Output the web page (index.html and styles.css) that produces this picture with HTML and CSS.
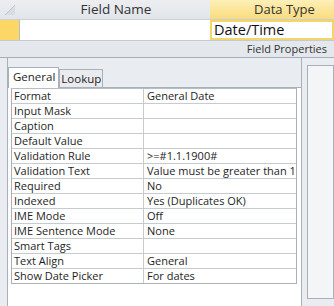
FILE: index.html
```html
<!DOCTYPE html>
<html>
<head>
<meta charset="utf-8">
<link rel="stylesheet" href="styles.css">
</head>
<body>
<div class="app">
  <div class="top">
    <div class="hdr">
      <div class="hdr-sel">
        <svg width="20" height="19" viewBox="0 0 20 19"><polygon points="5,15 15,15 15,5" fill="#d9dde3"/><line x1="5" y1="15" x2="15" y2="5" stroke="#c3c8cf" stroke-width="1"/></svg>
      </div>
      <div class="hdr-name">Field Name</div>
      <div class="hdr-type">Data Type</div>
    </div>
    <div class="row1">
      <div class="sel"></div>
      <div class="name-cell"></div>
      <div class="type-cell">Date/Time</div>
    </div>
    <div class="fp">Field Properties</div>
  </div>
  <div class="bottom">
    <div class="frame">
      <div class="tabs">
        <div class="tab active">General</div>
        <div class="tab">Lookup</div>
      </div>
      <div class="page">
        <div class="grid">
          <div class="lbl">Format</div><div class="val">General Date</div>
          <div class="lbl">Input Mask</div><div class="val"></div>
          <div class="lbl">Caption</div><div class="val"></div>
          <div class="lbl">Default Value</div><div class="val"></div>
          <div class="lbl">Validation Rule</div><div class="val">&gt;=#1.1.1900#</div>
          <div class="lbl">Validation Text</div><div class="val">Value must be greater than 1</div>
          <div class="lbl">Required</div><div class="val">No</div>
          <div class="lbl">Indexed</div><div class="val">Yes (Duplicates OK)</div>
          <div class="lbl">IME Mode</div><div class="val">Off</div>
          <div class="lbl">IME Sentence Mode</div><div class="val">None</div>
          <div class="lbl">Smart Tags</div><div class="val"></div>
          <div class="lbl">Text Align</div><div class="val">General</div>
          <div class="lbl last">Show Date Picker</div><div class="val last">For dates</div>
        </div>
      </div>
    </div>
    <div class="side"></div>
  </div>
</div>
</body>
</html>
```
FILE: styles.css
```css
html, body {
  margin: 0;
  padding: 0;
  width: 334px;
  height: 306px;
  overflow: hidden;
  background: #e9ecf0;
  font-family: "Open Sans", "Noto Sans", sans-serif;
  color: #1e1e1e;
}
.app {
  width: 334px;
  height: 306px;
  overflow: hidden;
}
.top {
  background: #e4e7eb;
}
.hdr {
  display: grid;
  grid-template-columns: 20px 190px 1fr;
  height: 19px;
  border-bottom: 1px solid #cbd0d7;
  background: linear-gradient(#eceef1, #e1e4e9);
}
.hdr-sel {
  height: 19px;
}
.hdr-sel svg {
  display: block;
}
.hdr-name {
  text-align: center;
  font-size: 13.5px;
  line-height: 19px;
  color: #333;
  padding-left: 2px;
}
.hdr-type {
  background: linear-gradient(#fdefb6, #f9dc7e);
  font-size: 13px;
  line-height: 19px;
  color: #333;
  padding-left: 44px;
}
.row1 {
  display: grid;
  grid-template-columns: 20px 190px 1fr;
  height: 20px;
  border-bottom: 1px solid #c5cad2;
  background: #fff;
}
.sel {
  background: #fcd766;
  border-right: 1px solid #b9bec6;
}
.name-cell {
  background: #fff;
}
.type-cell {
  border: 2px solid #f3d66a;
  font-size: 14.5px;
  line-height: 16px;
  padding-left: 2px;
  color: #111;
}
.fp {
  height: 16px;
  border-bottom: 1px solid #a7aeb8;
  font-size: 11px;
  line-height: 16px;
  text-align: right;
  padding-right: 7px;
  color: #333;
}
.bottom {
  display: flex;
  align-items: flex-start;
  padding-left: 7px;
  gap: 5px;
}
.frame {
  width: 294px;
  height: 243px;
  border-left: 1px solid #a9b0ba;
  border-right: 1px solid #a9b0ba;
  border-bottom: 1px solid #a9b0ba;
  padding-top: 9px;
  display: flex;
  flex-direction: column;
}
.tabs {
  display: flex;
  align-items: flex-end;
  height: 20px;
  position: relative;
  z-index: 1;
}
.tab {
  border: 1px solid #a9b0ba;
  border-bottom: none;
  background: #e9ebee;
  font-size: 11.5px;
  height: 17px;
  line-height: 18px;
  padding: 0 1px 0 1px;
  color: #1e1e1e;
}
.tab.active {
  background: #fff;
  height: 20px;
  line-height: 18px;
  font-size: 11.5px;
  padding: 0 3px 0 4px;
  margin-bottom: -1px;
}
.page {
  flex: 1;
  background: #fff;
  border-top: 1px solid #a9b0ba;
  padding: 0 4px 0 3px;
}
.grid {
  display: grid;
  grid-template-columns: 132px 1fr;
  border: 1px solid #a9b0ba;
  border-top: 1px solid #b7bdc6;
  width: 284px;
}
.lbl, .val {
  height: 14px;
  line-height: 14px;
  font-size: 11px;
  border-bottom: 1px solid #c6cbd2;
  white-space: nowrap;
  overflow: hidden;
  color: #1e1e1e;
}
.lbl {
  padding-left: 2px;
  border-right: 1px solid #c6cbd2;
}
.val {
  padding-left: 3px;
}
.last {
  border-bottom: none;
}
.side {
  margin-top: 7px;
  width: 40px;
  height: 232px;
  background: #f4f5f7;
  border: 1px solid #a9b0ba;
}
```
